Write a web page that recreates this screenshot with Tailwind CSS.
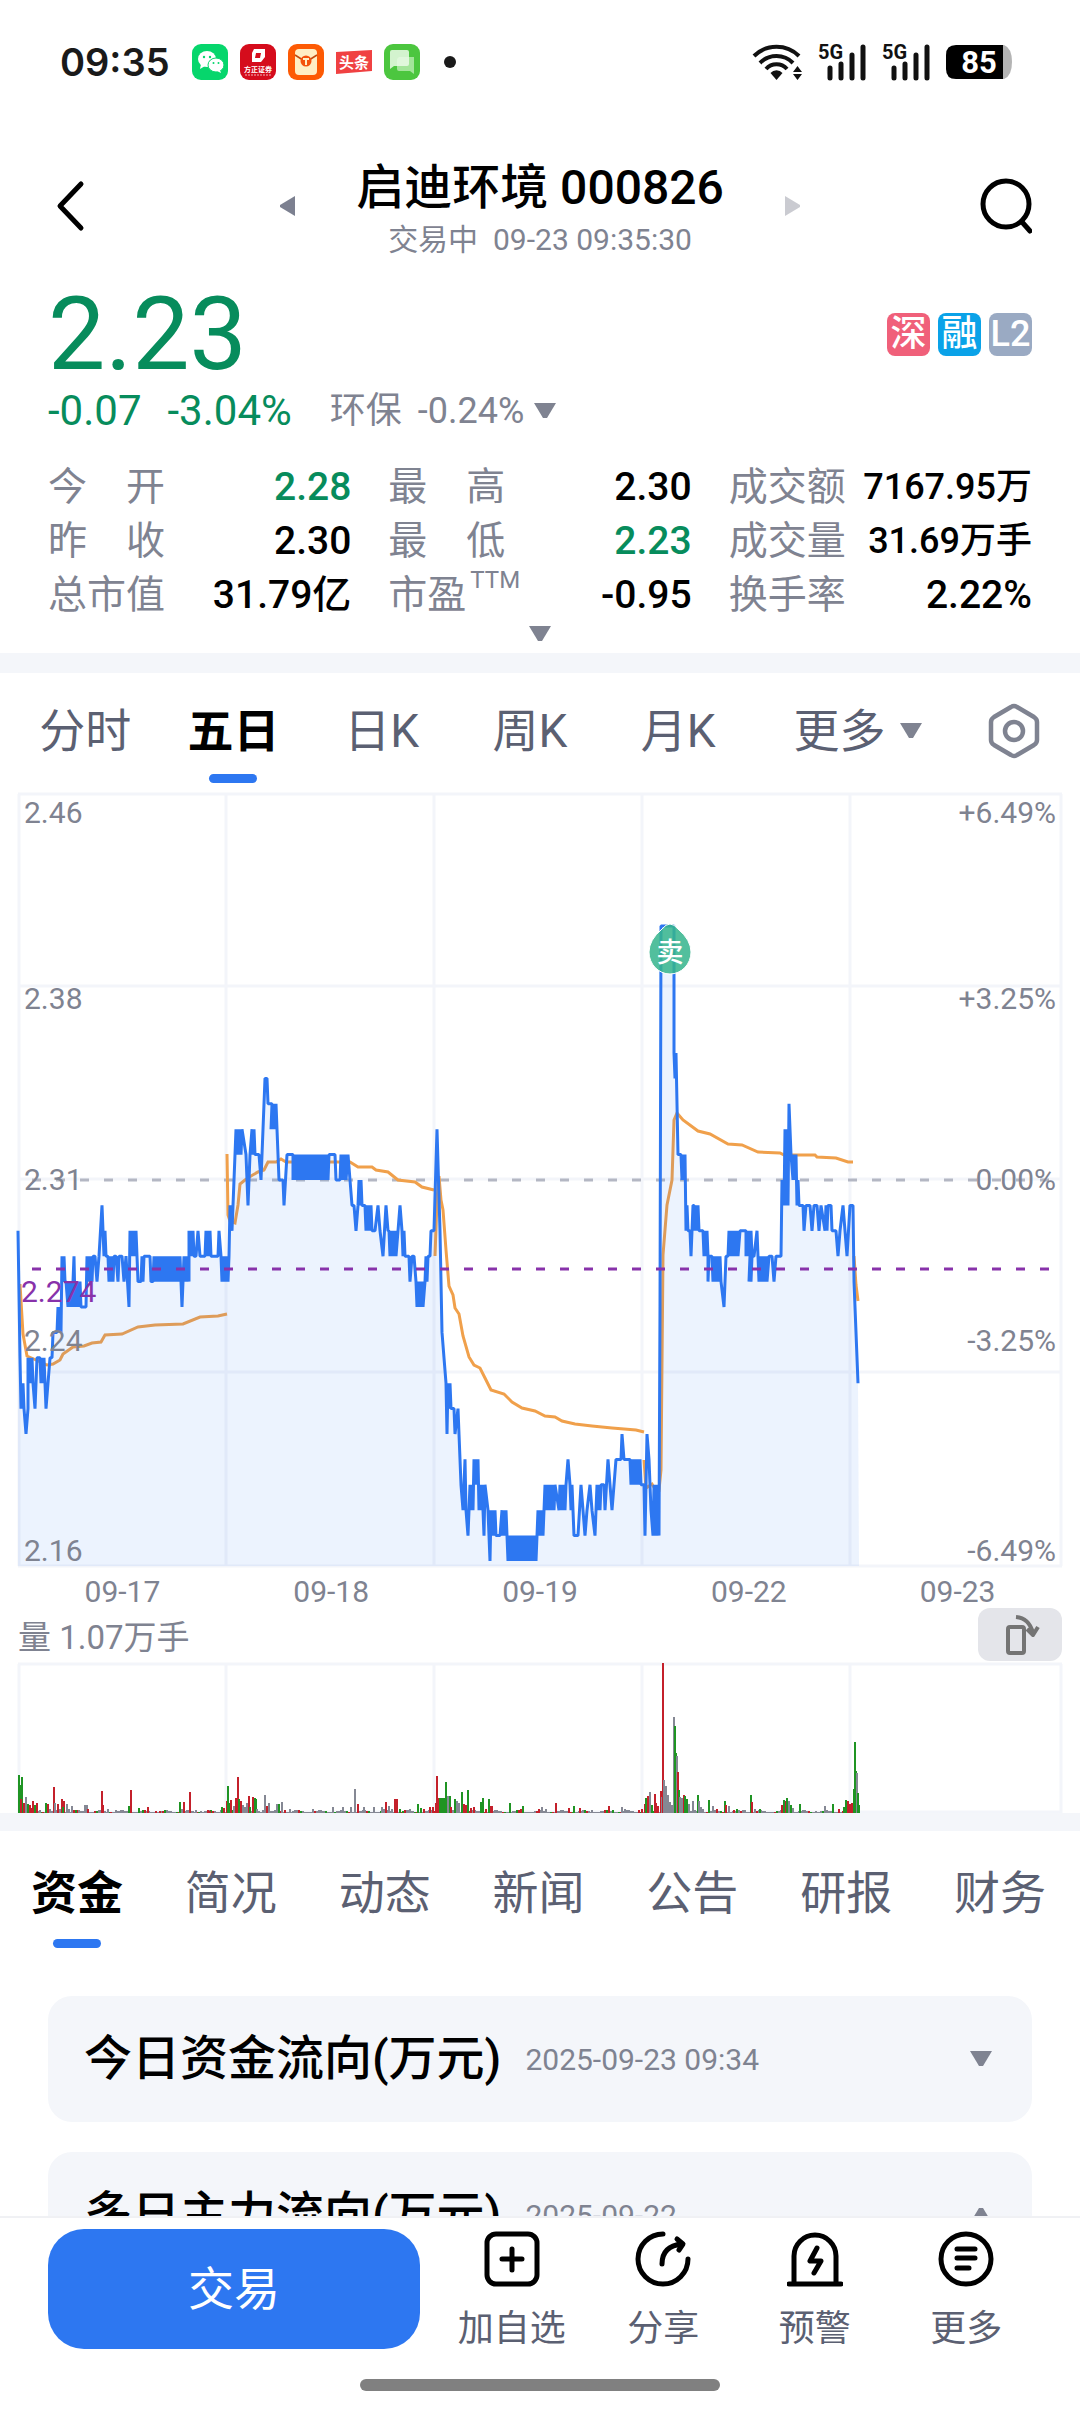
<!DOCTYPE html>
<html lang="zh-CN">
<head>
  <meta charset="UTF-8" />
  <meta name="viewport" content="width=device-width, initial-scale=1.0"/>
  <title>启迪环境 000826</title>
  <script src="https://cdn.jsdelivr.net/npm/@tailwindcss/browser@4"></script>
</head>
<body class="bg-white text-black h-screen flex flex-col overflow-hidden font-['Roboto','Noto_Sans_CJK_SC',sans-serif]">

  <!-- Status bar -->
  <div class="h-[124px] shrink-0 flex items-center justify-between pl-[60px] pr-[68px]">
    <div class="flex items-center gap-3">
      <span class="font-['Inter',sans-serif] font-semibold text-[38px] leading-[48px] text-[#1a1a1a] mr-[10px]">09:35</span>
      <svg class="size-9" viewBox="0 0 36 36">
        <rect width="36" height="36" rx="9" fill="#06d66c"/>
        <ellipse cx="15" cy="15" rx="9" ry="8" fill="#fff"/><path d="M9 20l-1 5 5-3z" fill="#fff"/>
        <ellipse cx="24" cy="21" rx="8" ry="7" fill="#fff" stroke="#06d66c"/><path d="M28 26l1 3-4-2z" fill="#fff"/>
        <g fill="#06d66c"><circle cx="12" cy="13" r="1.2"/><circle cx="18" cy="13" r="1.2"/><circle cx="21.500" cy="19" r="1"/><circle cx="26.500" cy="19" r="1"/></g>
      </svg>
      <svg class="size-9 overflow-visible" viewBox="0 0 36 36">
        <rect width="36" height="36" rx="9" fill="#d50c1c"/>
        <path d="M14 5h11v8l-4 5H12V9z" fill="#fff"/><path d="M16 9h5l-1 5h-5z" fill="#d50c1c"/>
        <text x="18" y="28" font-size="7" font-weight="700" text-anchor="middle" fill="#fff">方正证券</text>
        <path d="M5 31h26" stroke="#fff" stroke-width="1" stroke-dasharray="2 1" opacity=".7"/>
      </svg>
      <svg class="size-9" viewBox="0 0 36 36">
        <rect width="36" height="36" rx="9" fill="#fd5a04"/>
        <rect x="7" y="5" width="22" height="26" rx="4" fill="#ffeec4"/>
        <path d="M7 11l11 7 11-7" fill="none" stroke="#c2490e" stroke-width="1.500"/>
        <circle cx="18" cy="17" r="5.500" fill="#f4510b"/><path d="M15 15h6M18 15v6" stroke="#ffeec4" stroke-width="2"/>
      </svg>
      <svg class="size-9 overflow-visible" viewBox="0 0 36 36">
        <path d="M0 8l36-2v21l-36 3z" fill="#f04142"/>
        <text x="18" y="24" font-size="15" font-weight="700" text-anchor="middle" fill="#fff">头条</text>
      </svg>
      <svg class="size-9" viewBox="0 0 36 36">
        <rect width="36" height="36" rx="9" fill="#4cc63f"/>
        <path d="M15 13h15v17l-4-3H15a2 2 0 0 1-2-2V15z" fill="#b9ecb2" opacity=".8"/>
        <path d="M8 6h15a2 2 0 0 1 2 2v12a2 2 0 0 1-2 2H10l-4 3V8a2 2 0 0 1 2-2z" fill="#ebfae8" opacity=".85"/>
      </svg>
      <span class="size-3 rounded-full bg-[#1a1a1a] ml-3"></span>
    </div>
    <div class="flex items-center gap-4">
      <svg class="w-[50px] h-9" viewBox="0 0 50 36" fill="none" stroke="#111" stroke-width="4">
        <path d="M2 12a32 32 0 0 1 45 0M8 19a23 23 0 0 1 33 0M14 25a14 14 0 0 1 21 0"/>
        <path d="M24.500 36l-6-7a8 8 0 0 1 12 0z" fill="#111" stroke="none"/>
        <path d="M41 28l4.500-6 4.500 6zM41 30l4.500 6 4.500-6z" fill="#111" stroke="none"/>
      </svg>
      <svg class="w-12 h-9 overflow-visible" viewBox="0 0 48 36">
        <text x="0" y="15" font-size="20" font-weight="700" fill="#111">5G</text>
        <path d="M12 24v10M23 20v14M34 11v23M45 3v31" stroke="#111" stroke-width="5" stroke-linecap="round"/>
      </svg>
      <svg class="w-12 h-9 overflow-visible" viewBox="0 0 48 36">
        <text x="0" y="15" font-size="20" font-weight="700" fill="#111">5G</text>
        <path d="M12 24v10M23 20v14M34 11v23M45 3v31" stroke="#111" stroke-width="5" stroke-linecap="round"/>
      </svg>
      <svg class="w-[66px] h-[34px] overflow-visible" viewBox="0 0 66 34">
        <path d="M57 0h1q8 3 8 17t-8 17h-1z" fill="#b4b4b4"/>
        <path d="M10 0h47v34H10Q0 34 0 24V10Q0 0 10 0z" fill="#000"/>
        <text x="33" y="28" font-size="31" font-weight="700" text-anchor="middle" fill="#fff">85</text>
      </svg>
    </div>
  </div>

  <!-- Title bar -->
  <header class="h-[154px] pt-8 shrink-0 flex items-start justify-between px-12">
    <button class="h-[100px] w-14 flex items-center" aria-label="返回">
      <svg class="w-11 h-[52px]" viewBox="0 0 44 52" fill="none" stroke="#000" stroke-width="5" stroke-linecap="round" stroke-linejoin="round"><path d="M33 4L12 26l21 22"/></svg>
    </button>
    <div class="flex items-start gap-[61px]">
      <button class="h-[100px]" aria-label="上一只"><svg class="w-4 h-5" viewBox="0 0 16 20"><path d="M16 0v20L1 11V9z" fill="#7c8090"/></svg></button>
      <div class="text-center">
        <h1 class="text-[48px] leading-[64px] font-medium">启迪环境 000826</h1>
        <p class="text-[30px] leading-[40px] text-[#7f8391]">交易中&nbsp; 09-23 09:35:30</p>
      </div>
      <button class="h-[100px]" aria-label="下一只"><svg class="w-4 h-5" viewBox="0 0 16 20"><path d="M0 0v20l15-9V9z" fill="#cacbd1"/></svg></button>
    </div>
    <button class="h-[100px] w-14 flex items-center" aria-label="搜索">
      <svg class="size-14" viewBox="0 0 56 56" fill="none" stroke="#000" stroke-width="5" stroke-linecap="round"><circle cx="30" cy="26" r="23"/><path d="M46 44l8 9"/></svg>
    </button>
  </header>

  <main class="flex-1 min-h-0 overflow-hidden">

    <!-- Price -->
    <section class="px-12">
      <div class="flex items-center justify-between">
        <div class="text-[102px] leading-[112px] text-[#078c5c]">2.23</div>
        <div class="flex gap-2 text-white text-[36px] leading-[42px] font-medium text-center">
          <span class="size-[43px] rounded-lg bg-[#f0607a]">深</span>
          <span class="size-[43px] rounded-lg bg-[#0aa2e8]">融</span>
          <span class="size-[43px] rounded-lg bg-[#9aaac3]">L2</span>
        </div>
      </div>
      <div class="flex items-center h-[42px] text-[42px] leading-[42px] text-[#078c5c]">
        <span>-0.07</span>
        <span class="ml-[26px]">-3.04%</span>
        <button class="ml-[38px] flex items-center text-[36px] text-[#7f8391]">
          <span>环保</span><span class="ml-4">-0.24%</span>
          <svg class="w-[22px] h-4 ml-[10px]" viewBox="0 0 22 16"><path d="M0 0h22L13 15h-4z" fill="#7f8391"/></svg>
        </button>
      </div>

      <dl class="grid grid-cols-[303fr_303fr_303fr] gap-x-[37px] mt-[28px] text-[39px] leading-[54px] font-medium">
        <div class="flex justify-between"><dt class="font-normal text-[#7f8391]">今　开</dt><dd class="text-[#078c5c]">2.28</dd></div>
        <div class="flex justify-between"><dt class="font-normal text-[#7f8391]">最　高</dt><dd>2.30</dd></div>
        <div class="flex justify-between"><dt class="font-normal text-[#7f8391]">成交额</dt><dd class="text-[36px]">7167.95万</dd></div>
        <div class="flex justify-between"><dt class="font-normal text-[#7f8391]">昨　收</dt><dd>2.30</dd></div>
        <div class="flex justify-between"><dt class="font-normal text-[#7f8391]">最　低</dt><dd class="text-[#078c5c]">2.23</dd></div>
        <div class="flex justify-between"><dt class="font-normal text-[#7f8391]">成交量</dt><dd class="text-[36px]">31.69万手</dd></div>
        <div class="flex justify-between"><dt class="font-normal text-[#7f8391]">总市值</dt><dd>31.79亿</dd></div>
        <div class="flex justify-between"><dt class="font-normal text-[#7f8391] flex items-start">市盈<span class="text-[24px] leading-[24px] pl-1">TTM</span></dt><dd>-0.95</dd></div>
        <div class="flex justify-between"><dt class="font-normal text-[#7f8391]">换手率</dt><dd>2.22%</dd></div>
      </dl>
      <button class="h-[31px] w-full flex justify-center items-start pt-1" aria-label="展开">
        <svg class="w-[22px] h-4" viewBox="0 0 22 16"><path d="M0 0h22L13 15h-4z" fill="#7f8391"/></svg>
      </button>
    </section>

    <div class="h-5 bg-[#f4f6fa]"></div>

    <!-- Chart period tabs -->
    <nav class="grid grid-cols-[148fr_148fr_148fr_148fr_148fr_210fr_102fr] h-[119px] pl-[11px] pr-[15px] text-[46px] leading-[60px] text-[#5b6072]">
      <button class="pt-7 pb-8">分时</button>
      <button class="pt-7 flex flex-col items-center font-bold text-black">五日<span class="mt-[13px] w-12 h-[9px] rounded-full bg-[#2d77f1]"></span></button>
      <button class="pt-7 pb-8">日K</button>
      <button class="pt-7 pb-8">周K</button>
      <button class="pt-7 pb-8">月K</button>
      <button class="pt-7 pb-8 flex items-center justify-center gap-[14px]">更多<svg class="w-[22px] h-4" viewBox="0 0 22 16"><path d="M0 0h22L13 15h-4z" fill="#7f8391"/></svg></button>
      <button class="pt-7 pb-8 flex items-center justify-center" aria-label="设置">
        <svg class="w-[52px] h-14" viewBox="0 0 52 56" fill="none" stroke="#7f8391" stroke-width="4.500" stroke-linejoin="round"><path d="M23 4q3-2 6 0l17 10q3 2 3 5v18q0 3-3 5L29 52q-3 2-6 0L6 42q-3-2-3-5V19q0-3 3-5z"/><circle cx="26" cy="28" r="9"/></svg>
      </button>
    </nav>

    <!-- Five day price chart -->
    <svg id="price-chart" class="w-full" viewBox="0 792 1080 776" fill="none"></svg>
    <div class="grid grid-cols-5 px-[18px] h-[42px] text-[30px] leading-[48px] text-[#7f8391] text-center">
      <span>09-17</span><span>09-18</span><span>09-19</span><span>09-22</span><span>09-23</span>
    </div>

    <!-- Volume -->
    <div class="flex justify-between items-end h-[51px] px-[18px] text-[33px] leading-[46px] text-[#7f8391]">
      <span>量 1.07万手</span>
      <button class="w-[84px] h-[53px] rounded-xl bg-[#e4e5ea] flex items-center justify-center" aria-label="横屏">
        <svg class="w-10 h-11" viewBox="0 0 40 44" fill="none" stroke="#747474" stroke-width="4" stroke-linejoin="round"><rect x="8" y="14" width="16" height="26" rx="2"/><path d="M16 4q13 1 17 16M27 16l6 6 5-8"/></svg>
      </button>
    </div>
    <svg id="volume-chart" class="w-full" viewBox="0 1661 1080 152" fill="none"></svg>

    <div class="h-[18px] bg-[#f4f6fa]"></div>

    <!-- Info tabs -->
    <nav class="grid grid-cols-7 h-[165px] pr-[3px] text-[46px] leading-[60px] text-[#5b6072]">
      <button class="pt-8 flex flex-col items-center font-bold text-black">资金<span class="mt-4 w-12 h-[9px] rounded-full bg-[#2d77f1]"></span></button>
      <button class="pt-8 pb-[73px]">简况</button>
      <button class="pt-8 pb-[73px]">动态</button>
      <button class="pt-8 pb-[73px]">新闻</button>
      <button class="pt-8 pb-[73px]">公告</button>
      <button class="pt-8 pb-[73px]">研报</button>
      <button class="pt-8 pb-[73px]">财务</button>
    </nav>

    <section class="px-12 flex flex-col gap-[30px]">
      <button class="h-[126px] rounded-3xl bg-[#f4f6fa] flex items-center pl-[36px] pr-10">
        <span class="text-[48px] font-medium">今日资金流向(万元)</span>
        <span class="text-[30px] text-[#7f8391] ml-6">2025-09-23 09:34</span>
        <svg class="w-[22px] h-4 ml-auto" viewBox="0 0 22 16"><path d="M0 0h22L13 15h-4z" fill="#7f8391"/></svg>
      </button>
      <button class="h-[126px] rounded-3xl bg-[#f4f6fa] flex items-center pl-[36px] pr-10">
        <span class="text-[48px] font-medium">多日主力流向(万元)</span>
        <span class="text-[30px] text-[#7f8391] ml-6">2025-09-22</span>
        <svg class="w-[22px] h-4 ml-auto" viewBox="0 0 22 16"><path d="M0 16h22L13 1h-4z" fill="#7f8391"/></svg>
      </button>
    </section>
  </main>

  <!-- Bottom bar -->
  <footer class="shrink-0 h-[196px] bg-white border-t-2 border-[#f0f1f4]">
    <div class="flex items-start h-[132px] pl-12 pr-[38px] pt-[11px]">
      <button class="w-[372px] h-[120px] rounded-[36px] bg-[#2d77f1] text-white text-[46px]">交易</button>
      <div class="flex-1 grid grid-cols-4 ml-[16px] text-[36px] leading-[48px] text-[#5b6072]">
        <button class="flex flex-col items-center pt-[2px] gap-[18px]">
          <svg class="size-14" viewBox="0 0 56 56" fill="none" stroke="#000" stroke-width="5" stroke-linecap="round"><rect x="3" y="3" width="50" height="50" rx="9"/><path d="M28 18v21M18 28h20"/></svg>加自选
        </button>
        <button class="flex flex-col items-center pt-[2px] gap-[18px]">
          <svg class="size-14" viewBox="0 0 56 56" fill="none" stroke="#000" stroke-width="5" stroke-linecap="round" stroke-linejoin="round"><path d="M28 3a25 25 0 1 0 25 25M27 33q0-18 20-20M42 8l6 5-4 6"/></svg>分享
        </button>
        <button class="flex flex-col items-center pt-[2px] gap-[18px]">
          <svg class="size-14" viewBox="0 0 56 56" fill="none" stroke="#000" stroke-width="5" stroke-linecap="round" stroke-linejoin="round"><path d="M2 53h52M7 53V25a21 21 0 0 1 42 0v28"/><path d="M30 17l-7 13h11l-7 12"/></svg>预警
        </button>
        <button class="flex flex-col items-center pt-[2px] gap-[18px]">
          <svg class="size-14" viewBox="0 0 56 56" fill="none" stroke="#000" stroke-width="5" stroke-linecap="round"><circle cx="28" cy="28" r="25"/><path d="M19 18h18M19 27h18M19 37h12"/></svg>更多
        </button>
      </div>
    </div>
    <div class="mx-auto mt-[29px] w-1/3 h-3 rounded-full bg-[#808080]"></div>
  </footer>

  <script>
    // One tick is 0.01 yuan, tick 0 is 2.31
    const tickY = t => 1180 - t * 25.4;

    // [from x, to x, tick, other tick]: a range that trades between two ticks, or [x, tick]
    const price = [
      [18,-2],[20,-7],[21,-9],[23,-8],[24,-9],[26,-10],[28,-9],[28,33,-7,-8],[35,-9],[37,-7],[38,40,-7,-7],[41,45,-8,-7],[46,-9],[48,-8],[50,50,-7,-8],[52,-7],[53,-6],[57,61,-6,-5],[62,65,-3,-4],[66,-4],[68,72,-5,-4],[74,-3],[75,81,-5,-4],[83,86,-5,-5],[87,93,-3,-4],[95,-3],[97,-4],[99,-3],[102,-1],[104,106,-3,-2],[108,114,-3,-4],[116,-3],[118,-4],[119,122,-3,-3],[124,-4],[126,-3],[129,-5],[130,137,-2,-3],[138,141,-4,-4],[142,144,-3,-4],[147,150,-3,-3],[151,153,-4,-4],[154,180,-3,-4],[182,-5],[184,189,-3,-4],[189,194,-2,-3],[196,-3],[198,-2],[200,205,-3,-3],[206,211,-2,-3],[212,218,-3,-3],[219,-2],[221,-3],[222,229,-4,-3],
      [230,-1],[232,-2],[233,-1],[235,1],[236,242,2,1],[246,1],[248,-1],[250,1],[252,255,2,1],[259,1],[261,0],[263,2],[265,4],[267,4],[268,272,3,3],[271,276,2,3],[278,1],[279,283,0,0],[284,-1],[287,1],[293,1],[293,320,0,1],[322,329,0,1],[330,335,1,1],[336,340,0,0],[340,346,0,1],[348,1],[350,0],[352,-1],[354,-1],[356,-2],[358,-1],[359,362,0,-1],[365,372,-1,-2],[375,-2],[378,-1],[380,-2],[383,-3],[386,-1],[388,-2],[389,396,-2,-3],[398,-2],[400,-1],[402,405,-2,-3],[409,-3],[410,-4],[412,414,-3,-3],[416,-4],[417,423,-5,-4],[425,428,-4,-3],[430,-3],[431,434,-2,-2],
      [437,2],[440,-2],[442,-6],[444,-7],[446,-8],[447,-10],[448,451,-8,-9],[454,-9],[455,-10],[458,-9],[460,-11],[461,-12],[463,-13],[465,-11],[466,-13],[468,-14],[470,473,-12,-13],[474,478,-11,-12],[479,482,-13,-12],[484,-14],[485,-12],[488,-13],[490,-15],[491,496,-13,-14],[500,-14],[502,507,-13,-14],[508,537,-15,-14],[538,543,-13,-14],[544,555,-13,-12],[559,566,-13,-12],[568,-11],[570,573,-12,-13],[574,-14],[578,-14],[581,-12],[583,-13],[585,-14],[587,-13],[590,-12],[592,-13],[595,-14],[597,601,-12,-13],[602,604,-12,-12],[605,-13],[608,-11],[610,-12],[612,-13],[614,-12],[616,621,-11,-11],[622,-10],[624,630,-11,-11],[631,641,-12,-11],[644,-12],
      [645,-14],[647,-10],[649,-11],[651,-13],[653,659,-14,-12],[660,-5],[661,10],[674,10],[674,5],[675,4],[676,5],[678,1],[681,685,1,0],[686,-2],[687,-1],[688,690,-2,-2],[691,-3],[693,-1],[694,699,-1,-2],[702,-2],[703,708,-2,-3],[708,-4],[709,712,-3,-3],[713,717,-4,-3],[718,721,-3,-4],[724,-5],[726,-3],[728,738,-3,-2],[740,746,-2,-2],[746,752,-3,-2],[749,752,-4,-3],[754,-3],[757,-2],[758,767,-3,-4],[769,772,-3,-3],[774,-4],[776,781,-3,-3],[782,0],[784,788,-1,2],[789,3],[791,1],[793,796,0,1],[797,799,-1,0],[803,-1],[804,-2],[806,810,-1,-1],[812,-2],[814,-1],[817,-1],[819,-2],[821,-1],[825,828,-2,-1],[831,-1],[832,836,-2,-2],[838,-3],[840,-2],[843,-1],[845,-2],[847,-3],[850,-1],[853,-1],
      [854,-4],[856,-6],[858,-8]
    ];

    const points = [];
    price.forEach(p => {
      if (p.length === 2) {
        points.push(p[0] + ',' + tickY(p[1]));
        return;
      }
      for (let x = p[0], i = 0; x <= p[1]; x++, i++) {
        points.push(x + ',' + tickY(i % 2 ? p[3] : p[2]));
      }
    });

    // Average price, one line for each day
    const average = [
      '20,1284 23,1334 27,1356 36,1360 47,1365 53,1364 60,1360 63,1354 73,1347 84,1346 92,1343 101,1342 105,1335 122,1334 138,1327 155,1325 183,1324 200,1317 218,1316 227,1314',
      '227,1154 228,1215 230,1221 235,1223 238,1205 240,1184 245,1180 251,1176 258,1172 264,1170 268,1162 276,1162 281,1159 286,1162 350,1162 358,1167 372,1167 376,1170 388,1172 398,1180 415,1182 422,1187 434,1190',
      '435,1256 437,1200 439,1176 441,1200 443,1210 446,1250 449,1286 453,1295 455,1308 459,1314 463,1336 469,1357 474,1365 480,1368 486,1380 491,1390 504,1394 512,1402 522,1408 535,1411 545,1416 555,1417 562,1421 575,1424 592,1426 612,1428 636,1430 644,1432',
      '644,1460 646,1488 652,1484 655,1489 659,1490 661,1470 663,1255 667,1205 672,1180 674,1120 677,1113 683,1120 698,1131 710,1134 728,1144 742,1145 758,1152 780,1153 784,1155 815,1155 817,1157 836,1158 848,1162 853,1162',
      '854,1256 856,1285 858,1301'
    ];

    const labels = [
      [823, '2.46', '+6.49%'],
      [1009, '2.38', '+3.25%'],
      [1190, '2.31', '0.00%'],
      [1351, '2.24', '-3.25%'],
      [1561, '2.16', '-6.49%']
    ];

    document.getElementById('price-chart').innerHTML = `
      <path d="M19 794V1566M226 794V1566M434 794V1566M642 794V1566M850 794V1566M1061 794V1566M18 794H1062M18 986H1062M18 1179H1062M18 1372H1062M18 1566H1062" stroke="#f3f5fa" stroke-width="3"/>
      <path d="M32 1180H1050" stroke="#b4b7c3" stroke-width="3" stroke-dasharray="9 15"/>
      ${average.map(a => `<polyline points="${a}" stroke="#f0a04b" stroke-width="3"/>`).join('')}
      <polygon points="18,1566 ${points.join(' ')} 859,1566" fill="#2d77f1" fill-opacity=".09"/>
      <polyline points="${points.join(' ')}" stroke="#2d77f1" stroke-width="3" stroke-linejoin="bevel"/>
      <path d="M32 1269H1050" stroke="#8832aa" stroke-width="3" stroke-dasharray="9 15"/>
      <path d="M670 924q4 0 8 5 13 11 13 23a21 22 0 0 1-42 0q0-12 13-23 4-5 8-5z" fill="#36b58d" fill-opacity=".86" stroke="#fff" stroke-width="1"/>
      <text x="670" y="962" font-size="27" font-weight="500" text-anchor="middle" fill="#fff">卖</text>
      ${labels.map(l => `<text x="24" y="${l[0]}" font-size="30" fill="#7f8391">${l[1]}</text><text x="1056" y="${l[0]}" font-size="30" text-anchor="end" fill="#7f8391">${l[2]}</text>`).join('')}
      <text x="21" y="1302" font-size="30" fill="#8832aa">2.274</text>
    `;

    // x, colour (r up, g down, k flat), height
    const volume = '18g38 20g28 21g36 20r14 23r10 25k16 27g9 29r8 31r5 32r12 34g8 36r10 39k3 45g10 47r9 49k4 53r26 54k10 57r9 59k4 61r14 63r12 62g6 66k9 68k4 71k7 73r3 75g3 84k8 86k8 87r4 101r22 102r8 107k4 115k3 120k3 128g7 130r23 138g5 147r6 155r2 159r2 179g11 181k4 183r11 189r21 195k3 200k2 207r3 209r2 220k3 221g6 223r5 ' +
      '226r12 227g27 229g10 230r13 233k7 235r15 237r36 238g14 240r12 242k8 244k6 246k10 248r17 249g6 252r16 254g15 255g14 256k4 262k3 264k18 266r7 268k10 276k9 278g9 281k11 284r3 289k4 294k3 312k4 325g2 332k6 342k6 350k6 354k24 357r9 363k6 373k6 381k6 383k4 385r11 388k7 391k4 394r14 396r14 399g4 404r3 409k4 417g9 420g5 423r4 429r6 432r6 ' +
      '435r10 436r37 438r15 439g15 441g15 443g15 445g31 447k17 449g17 450r6 454g14 456k12 458k10 461g21 463r9 465r8 467g23 470r5 473r6 480g11 482g15 485r4 488g14 490r7 491r7 509g10 520r4 522g7 538r4 541k6 545k4 555r10 568r5 573g7 579r5 591k3 608r7 612g3 621k6 624k4 630k2 638r3 641r4 ' +
      '644r9 645g15 647r17 649k21 651g8 654r19 655r10 657r7 660r22 661k16 662r150 663k33 664k26 665k27 667k18 669k11 671k8 673k96 674g87 675g60 676k57 677r41 678g23 679k16 681k15 683r18 684g17 686g14 688k9 692k12 697g18 698k12 700k6 702k4 708g13 712k7 716r4 724g12 725r8 728k7 733r3 736g4 742k3 744k3 750g18 751r11 754k4 759g4 781r8 783g13 785r12 786g15 788k12 790g8 792k5 799g9 803k3 815k2 824k7 832g9 838r4 843g6 845g13 847r12 849r9 851r10 ' +
      '853g24 854g71 855g42 856k40 857g20 858g8';
    const barColor = { r: '#c4202b', g: '#1f9423', k: '#858894' };
    let bars = '';
    for (let x = 18, i = 0; x < 852; x += 2, i++) {
      const h = 1 + (i * 7 + i * i) % 11 % 4 % 3;
      bars += `<rect x="${x}" y="${1813 - h}" width="2" height="${h}" fill="${barColor['kgkrkk'[(i * i + i) % 17 % 6]]}"/>`;
    }
    volume.split(' ').forEach(v => {
      const [, x, c, h] = v.match(/(\d+)([rgk])(\d+)/);
      bars += `<rect x="${x}" y="${1813 - h}" width="2" height="${h}" fill="${barColor[c]}"/>`;
    });

    document.getElementById('volume-chart').innerHTML = `
      <path d="M19 1664V1813M226 1664V1813M434 1664V1813M642 1664V1813M850 1664V1813M1061 1664V1813M18 1664H1062M18 1812H1062" stroke="#f3f5fa" stroke-width="3"/>
      ${bars}
    `;
  </script>
</body>
</html>
